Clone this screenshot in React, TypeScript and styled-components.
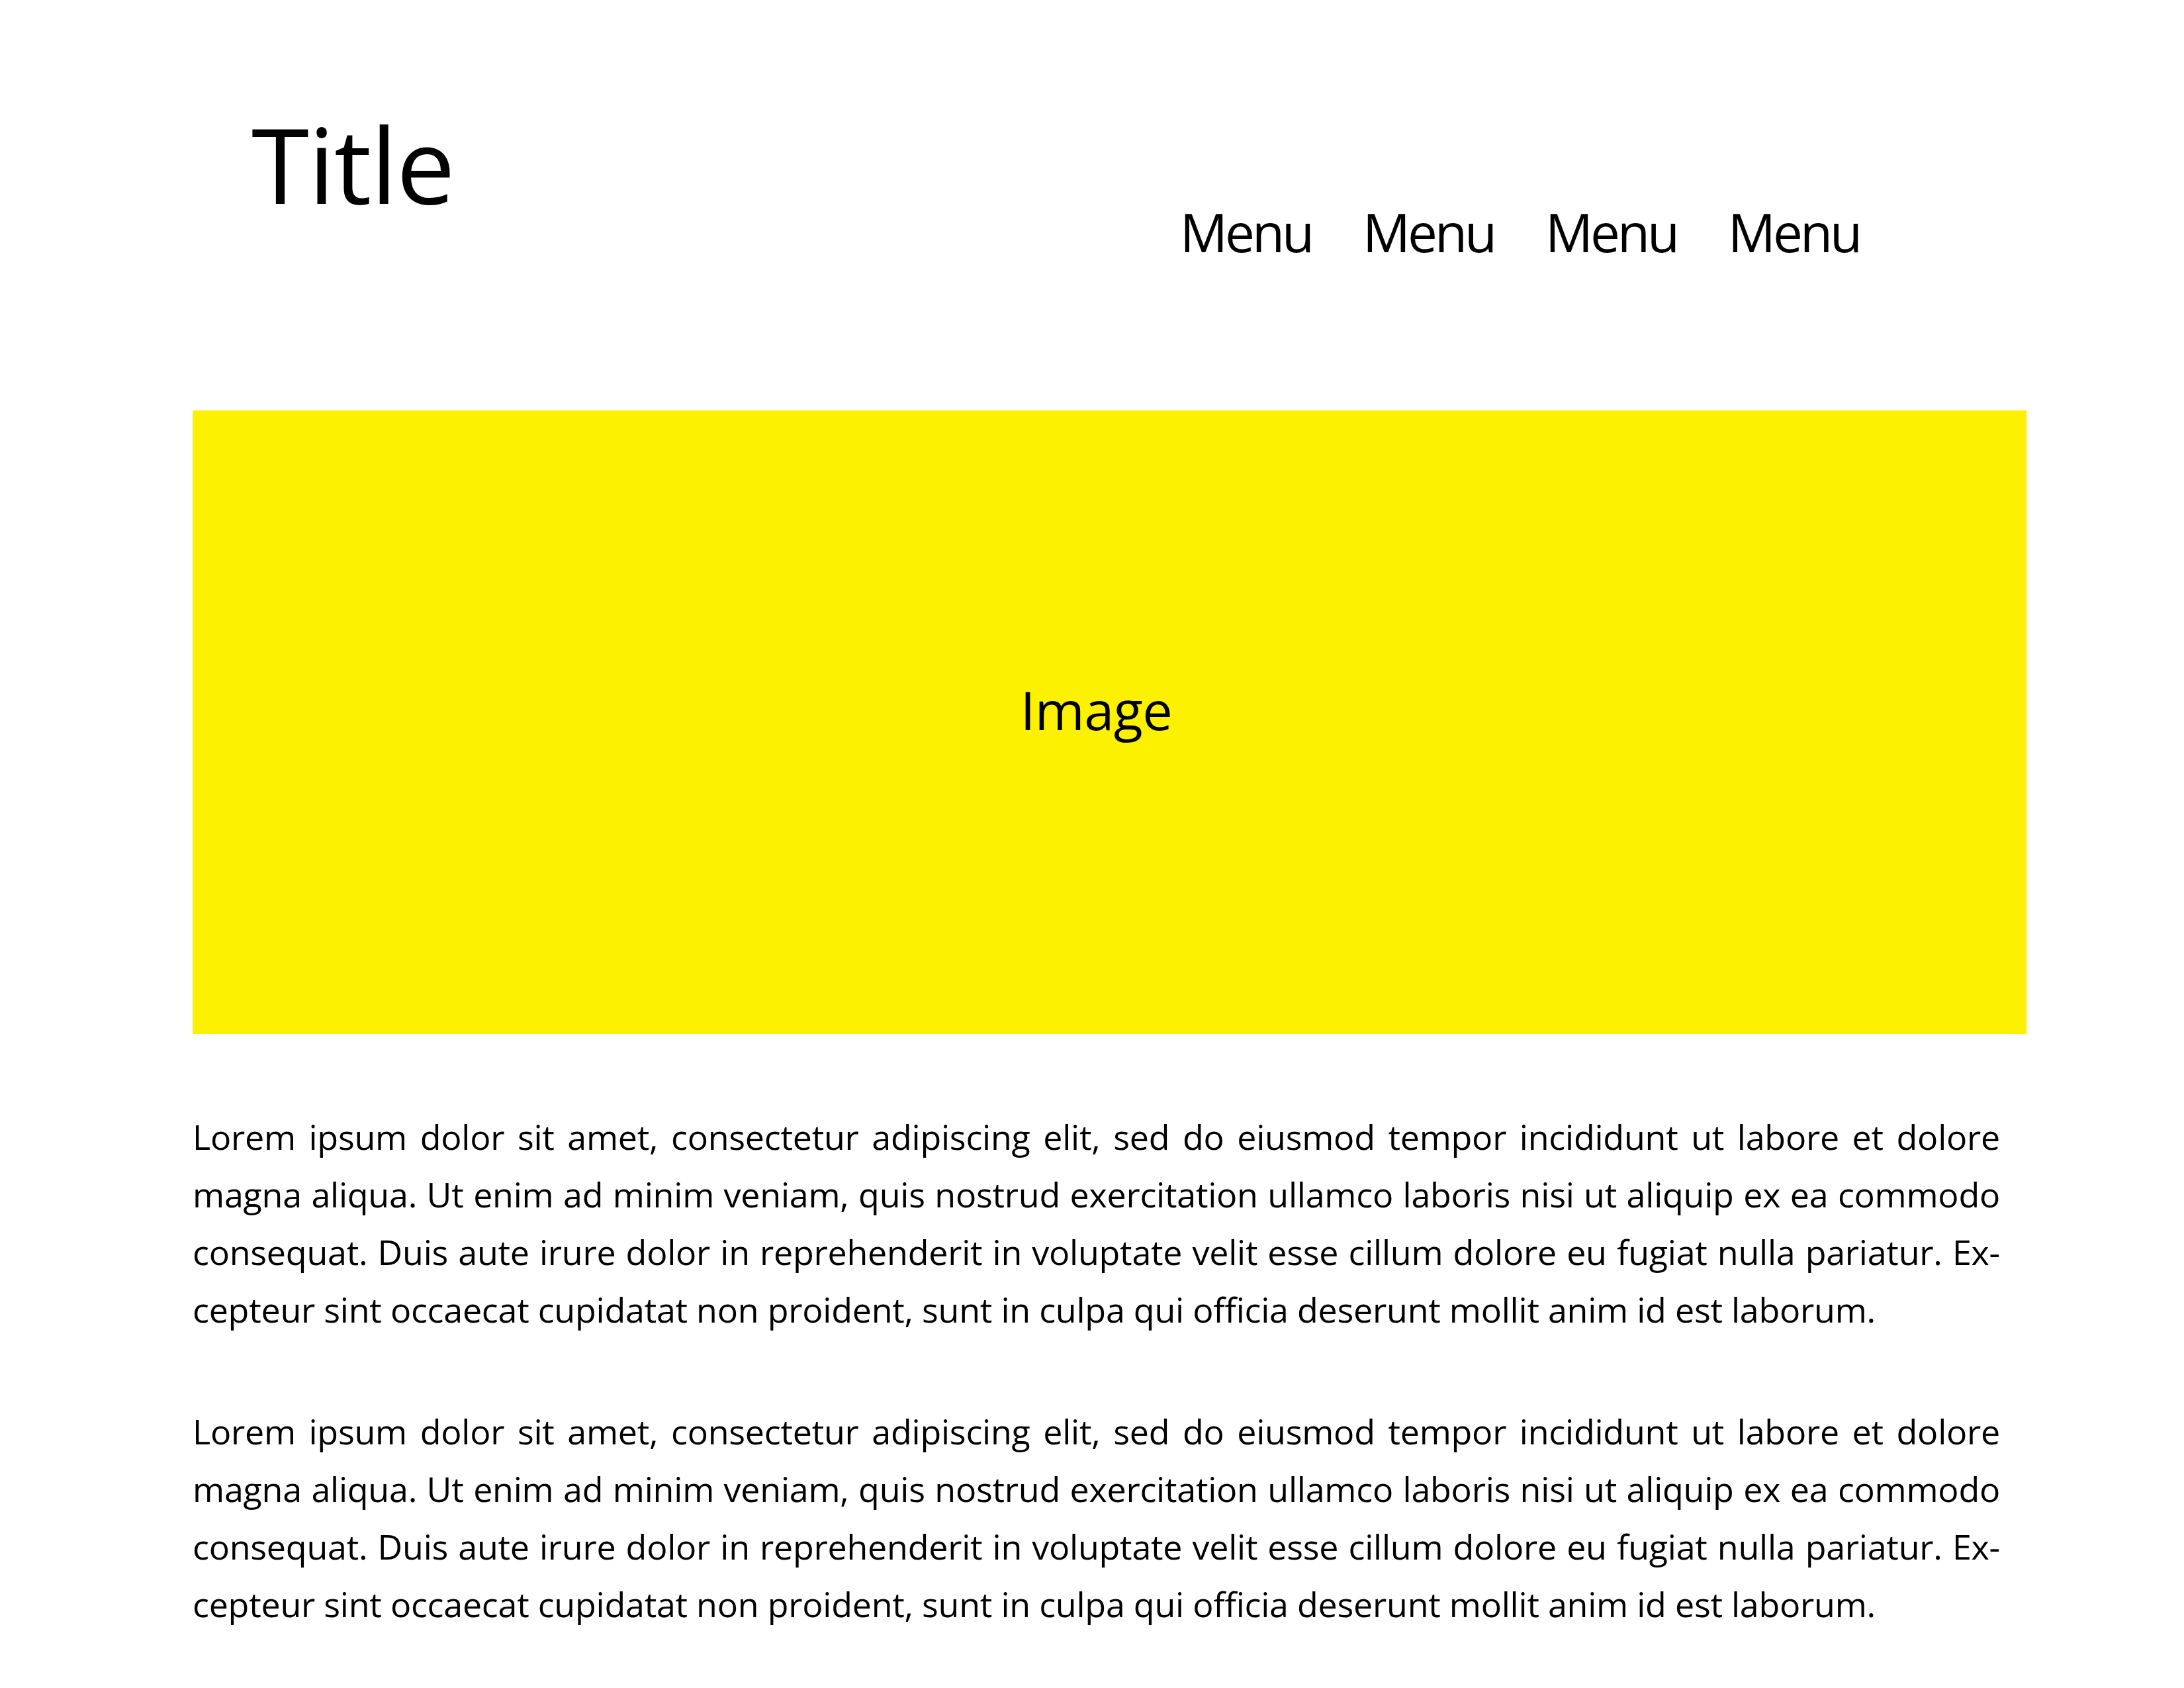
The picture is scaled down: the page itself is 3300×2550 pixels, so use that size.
import React from "react";
import styled, { createGlobalStyle } from "styled-components";

const GlobalStyle = createGlobalStyle`
  html, body {
    margin: 0;
    padding: 0;
    background: #ffffff;
  }
  body {
    font-family: "Open Sans", "Noto Sans", sans-serif;
    color: #000000;
  }
`;

const Page = styled.div`
  width: 2771px;
  padding: 168px 0 0 291px;
`;

const Header = styled.header`
  display: flex;
  justify-content: space-between;
  align-items: flex-start;
  height: 452px;
`;

const Title = styled.h1`
  margin: 0 0 0 89px;
  font-size: 158px;
  line-height: 1;
  font-weight: 400;
  letter-spacing: -1px;
`;

const Nav = styled.nav`
  display: flex;
  gap: 77px;
  margin: 142px 252px 0 0;
`;

const MenuItem = styled.span`
  font-size: 80px;
  line-height: 1;
  letter-spacing: -4px;
`;

const Hero = styled.div`
  height: 942px;
  background: #fcf100;
  display: flex;
  align-items: center;
  justify-content: center;
  box-sizing: border-box;
  padding: 0 40px 40px 0;
`;

const HeroLabel = styled.span`
  font-size: 81px;
  line-height: 1;
  letter-spacing: -0.5px;
`;

const Article = styled.article`
  width: 2731px;
  margin-top: 111px;
  display: flex;
  flex-direction: column;
  gap: 97px;
`;

const Paragraph = styled.p`
  margin: 0;
  font-size: 52px;
  line-height: 87px;
  letter-spacing: -0.25px;
`;

const Line = styled.span<{ $last?: boolean }>`
  display: block;
  white-space: nowrap;
  text-align: ${(p) => (p.$last ? "left" : "justify")};
  text-align-last: ${(p) => (p.$last ? "left" : "justify")};
`;

const lines = [
  "Lorem ipsum dolor sit amet, consectetur adipiscing elit, sed do eiusmod tempor incididunt ut labore et dolore",
  "magna aliqua. Ut enim ad minim veniam, quis nostrud exercitation ullamco laboris nisi ut aliquip ex ea commodo",
  "consequat. Duis aute irure dolor in reprehenderit in voluptate velit esse cillum dolore eu fugiat nulla pariatur. Ex-",
  "cepteur sint occaecat cupidatat non proident, sunt in culpa qui officia deserunt mollit anim id est laborum.",
];

function LoremParagraph() {
  return (
    <Paragraph>
      {lines.map((l, i) => (
        <Line key={i} $last={i === lines.length - 1}>
          {l}
        </Line>
      ))}
    </Paragraph>
  );
}

export default function App() {
  return (
    <>
      <GlobalStyle />
      <Page>
        <Header>
          <Title>Title</Title>
          <Nav>
            <MenuItem>Menu</MenuItem>
            <MenuItem>Menu</MenuItem>
            <MenuItem>Menu</MenuItem>
            <MenuItem>Menu</MenuItem>
          </Nav>
        </Header>
        <Hero>
          <HeroLabel>Image</HeroLabel>
        </Hero>
        <Article>
          <LoremParagraph />
          <LoremParagraph />
        </Article>
      </Page>
    </>
  );
}
